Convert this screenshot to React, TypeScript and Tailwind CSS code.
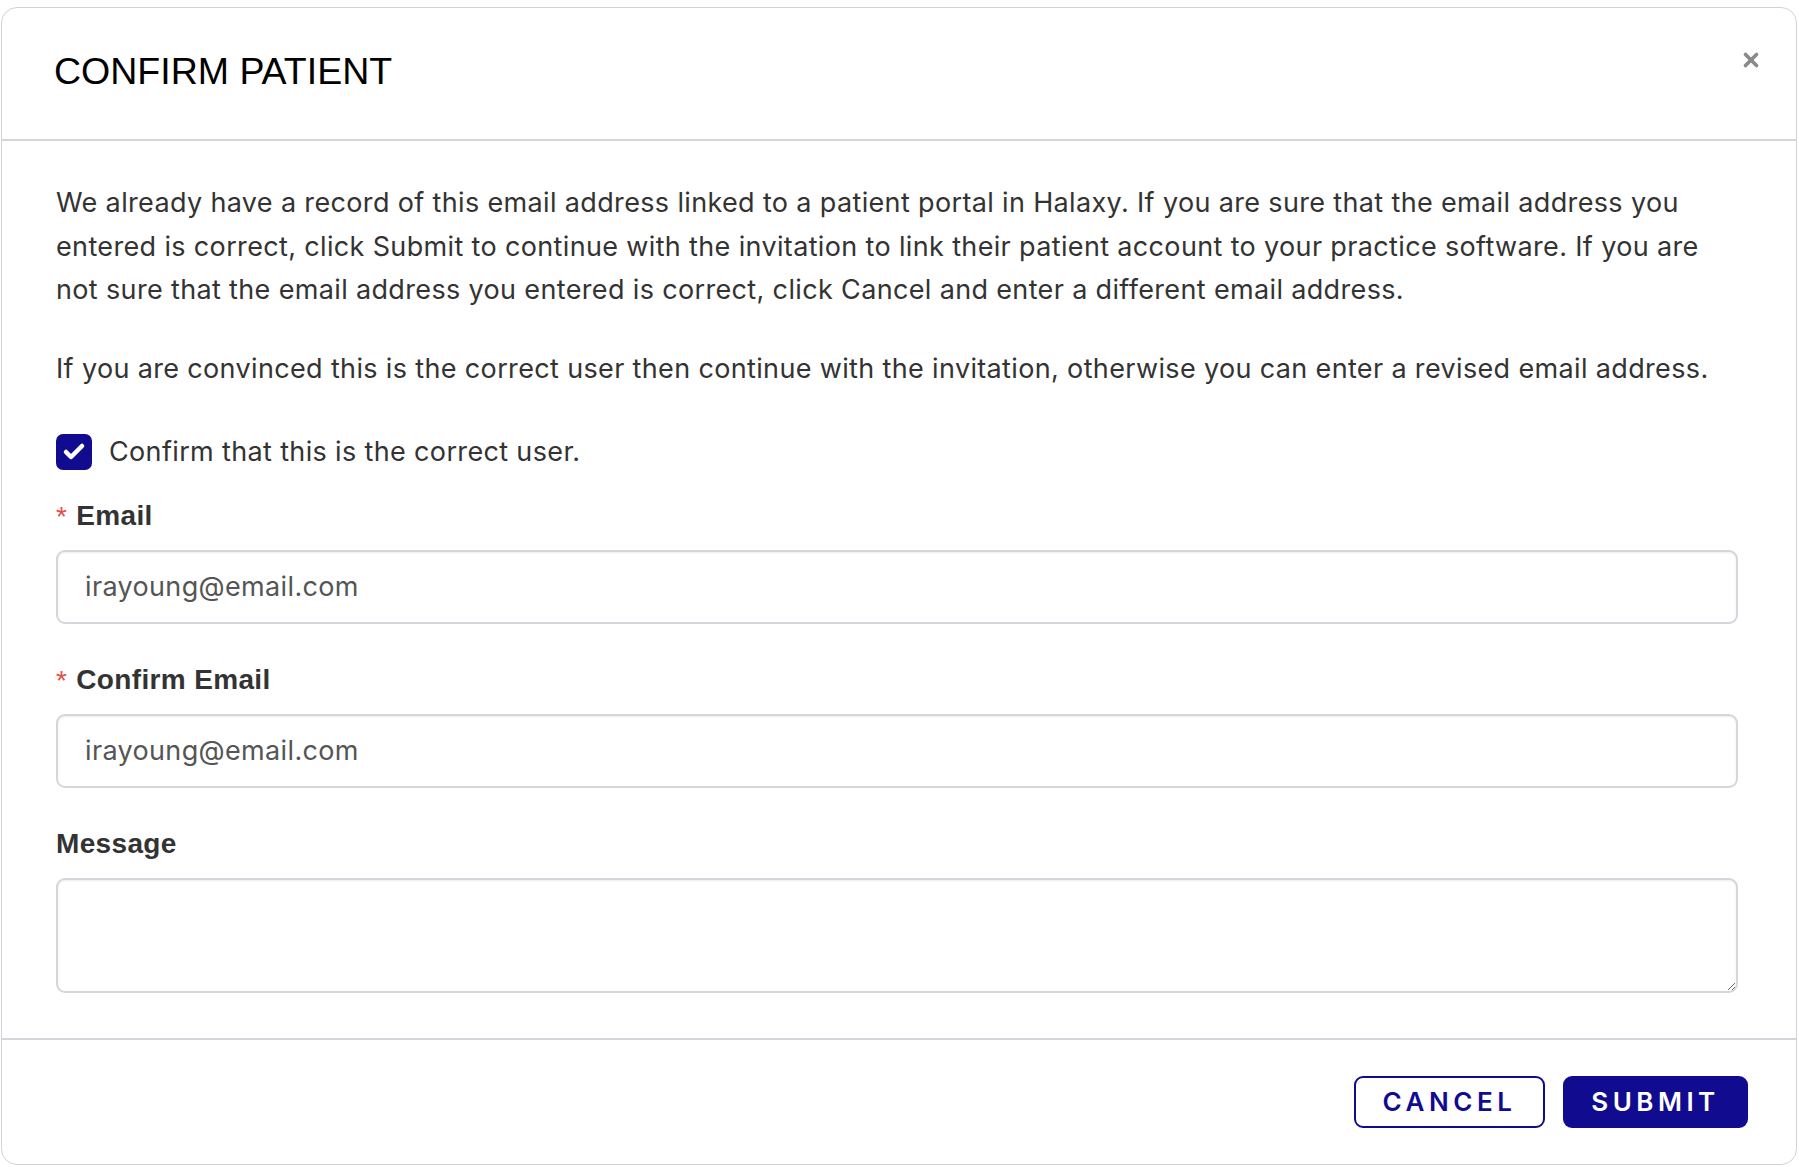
import { Check, X } from "lucide-react";

const NAVY = "bg-[#100b8f]";

function Label({ children, required }: { children: React.ReactNode; required?: boolean }) {
  return (
    <label className="flex h-[32px] items-center gap-[9px] font-['Liberation_Sans',Arial,sans-serif] text-[28px] leading-[32px] font-bold text-[#333]">
      {required && <span className="mt-[2px] text-[28px] font-normal text-[#e24f48]">*</span>}
      {children}
    </label>
  );
}

const fieldCls =
  "mt-[18px] h-[74px] w-full rounded-[9px] border-2 border-[#d3d7dc] px-[27px] text-[27px] tracking-[0.35px] text-[#555] shadow-[inset_0_1px_2px_rgba(0,0,0,0.08)] outline-none";

export default function App() {
  return (
    <div className="min-h-screen bg-white pt-[7px] pl-[1px] pr-[2px] font-['Inter','Noto_Sans',sans-serif]">
      <div className="flex flex-col rounded-[16px] border border-[#cfd3d8] bg-white">
        {/* header */}
        <div className="flex h-[133px] items-start justify-between border-b-2 border-[#d3d7dc] pl-[52px] pr-[34px]">
          <h2 className="pt-[43px] font-['Liberation_Sans',Arial,sans-serif] text-[37.5px] leading-[40px] text-black">
            CONFIRM PATIENT
          </h2>
          <button className="mt-[41px] text-[#8a8a8a]">
            <X size={22} strokeWidth={4} />
          </button>
        </div>

        {/* body */}
        <div className="flex flex-col pt-[40px] pr-[58px] pb-[45px] pl-[54px] text-[27px] leading-[43.5px] tracking-[0.35px] text-[#333]">
          <p className="mb-[35px]">
            We already have a record of this email address linked to a patient portal in Halaxy. If you are sure that the
            email address you entered is correct, click Submit to continue with the invitation to link their patient account
            to your practice software. If you are not sure that the email address you entered is correct, click Cancel and
            enter a different email address.
          </p>
          <p>
            If you are convinced this is the correct user then continue with the invitation, otherwise you can enter a
            revised email address.
          </p>

          <div className="mt-[40px] flex items-center gap-[17px]">
            <span className={`flex h-[36px] w-[36px] items-center justify-center rounded-[7px] ${NAVY} text-white`}>
              <Check size={24} strokeWidth={4.5} />
            </span>
            <span>Confirm that this is the correct user.</span>
          </div>

          <div className="mt-[26px]">
            <Label required>Email</Label>
            <input readOnly value="irayoung@email.com" className={fieldCls} />
          </div>

          <div className="mt-[40px]">
            <Label required>Confirm Email</Label>
            <input readOnly value="irayoung@email.com" className={fieldCls} />
          </div>

          <div className="mt-[40px]">
            <Label>Message</Label>
            <textarea className="mt-[18px] block h-[115px] w-full resize-y rounded-[9px] border-2 border-[#d3d7dc] px-[27px] py-[14px] text-[27px] text-[#555] shadow-[inset_0_1px_2px_rgba(0,0,0,0.08)] outline-none" />
          </div>
        </div>

        {/* footer */}
        <div className="flex justify-end gap-[18px] border-t-2 border-[#d3d7dc] pt-[36px] pr-[48px] pb-[36px]">
          <button className="h-[52px] w-[191px] rounded-[9px] border-2 border-[#100b8f] bg-white text-[26px] font-semibold tracking-[4.5px] text-[#100b8f]">
            CANCEL
          </button>
          <button className={`h-[52px] w-[185px] rounded-[9px] ${NAVY} text-[26px] font-semibold tracking-[4.5px] text-white`}>
            SUBMIT
          </button>
        </div>
      </div>
    </div>
  );
}
